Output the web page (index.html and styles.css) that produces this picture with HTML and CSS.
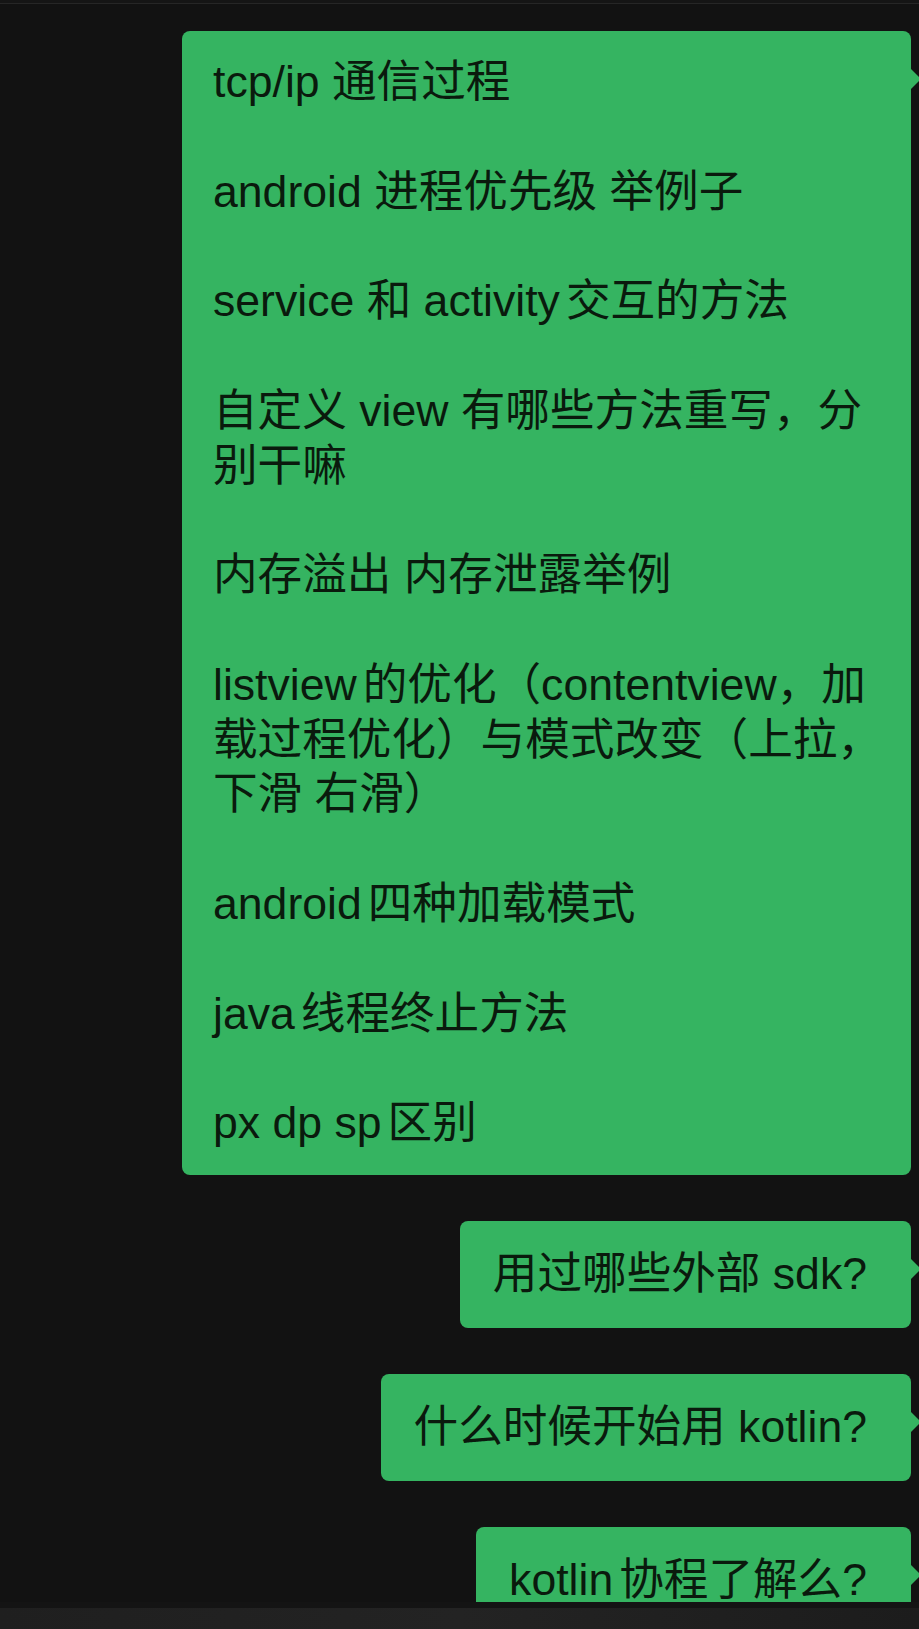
FILE: index.html
```html
<!DOCTYPE html>
<html lang="zh-CN">
<head>
<meta charset="utf-8">
<title>Chat</title>
<link rel="stylesheet" href="styles.css">
</head>
<body>
<div class="topline"></div>
<main class="chat">
  <div class="bubble bubble-big">
    <p>tcp/ip 通信过程</p>
    <p>android 进程优先级 举例子</p>
    <p>service 和 activity<span class="gap"></span>交互的方法</p>
    <p>自定义 view 有哪些方法重写，分<br>别干嘛</p>
    <p>内存溢出 内存泄露举例</p>
    <p>listview<span class="gap"></span>的优化（contentview，加<br>载过程优化）与模式改变（上拉，<br>下滑 右滑）</p>
    <p>android<span class="gap"></span>四种加载模式</p>
    <p>java<span class="gap"></span>线程终止方法</p>
    <p>px dp sp<span class="gap"></span>区别</p>
  </div>
  <div class="bubble bubble-small">用过哪些外部 sdk?</div>
  <div class="bubble bubble-small">什么时候开始用 kotlin?</div>
  <div class="bubble bubble-small">kotlin<span class="gap"></span>协程了解么?</div>
</main>
<div class="bottombar"></div>
</body>
</html>
```
FILE: styles.css
```css
html, body {
  margin: 0;
  padding: 0;
}
body {
  background: #121212;
  width: 919px;
  height: 1629px;
  overflow: hidden;
  font-family: "Liberation Sans", "Noto Sans CJK SC", sans-serif;
  color: #0a1a0d;
}
.topline {
  height: 3px;
  border-bottom: 1px solid #262626;
  background: #151515;
}
.chat {
  display: flex;
  flex-direction: column;
  align-items: flex-end;
  gap: 46px;
  padding: 27px 8px 0 0;
}
.bubble {
  position: relative;
  background: #35b461;
  border-radius: 8px;
  font-size: 44.6px;
  line-height: 54.8px;
  white-space: nowrap;
}
.bubble::after {
  content: "";
  position: absolute;
  right: -10px;
  top: 37px;
  border-top: 11px solid transparent;
  border-bottom: 11px solid transparent;
  border-left: 11px solid #35b461;
}
.gap {
  display: inline-block;
  width: 6px;
}
.bubble-big {
  width: 667px;
  padding: 24px 31px;
}
.bubble-big p {
  margin: 0;
}
.bubble-big p + p {
  margin-top: 54.8px;
}
.bubble-small {
  padding: 26px 44px 26px 33px;
}
.bottombar {
  position: fixed;
  left: 0;
  right: 0;
  bottom: 0;
  height: 21px;
  background: linear-gradient(to right, #1f1f1f, #232323 50%, #1c1c1c);
  border-top: 6px solid #141414;
}
```
